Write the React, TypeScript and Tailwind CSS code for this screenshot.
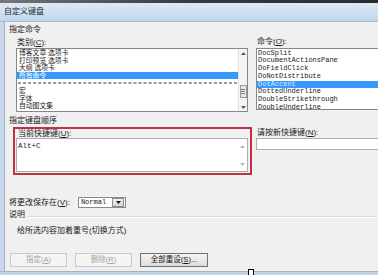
// Word "自定义键盘" dialog (Customize Keyboard), cropped screenshot

const categories = ['博客文章 选项卡', '打印预览 选项卡', '大纲 选项卡', '所有命令', '---', '宏', '字体', '自动图文集'];
const commands = [
  'DocSplit',
  'DocumentActionsPane',
  'DoFieldClick',
  'DoNotDistribute',
  'DotAccent',
  'DottedUnderline',
  'DoubleStrikethrough',
  'DoubleUnderline',
];

function Arrow({ up, dim }: { up?: boolean; dim?: boolean }) {
  return (
    <svg width="5" height="3" viewBox="0 0 5 3" className="block">
      <path d={up ? 'M0 3 L2.5 0 L5 3 Z' : 'M0 0 L2.5 3 L5 0 Z'} fill={dim ? '#b4b4b4' : '#5a5a5a'} />
    </svg>
  );
}

function Btn({ label, mn, disabled, w }: { label: string; mn: string; disabled?: boolean; w: string }) {
  return (
    <div
      className={`${w} h-[14px] flex items-center justify-center border text-[7.5px] ${
        disabled
          ? 'border-[#c9c9c9] bg-[#f4f4f4] text-[#a3a3a3]'
          : 'border-[#707070] bg-linear-to-b from-[#f4f4f4] to-[#dcdcdc] text-[#111]'
      }`}
    >
      {label}(<span className="underline">{mn}</span>){disabled ? '' : '...'}
    </div>
  );
}

export default function App() {
  return (
    <div className="relative w-[378px] h-[275px] overflow-hidden bg-[#f0f0f0] flex flex-col font-['Liberation_Sans','Noto_Sans_CJK_SC',sans-serif] text-[8px] leading-[10px] text-[#1a1a1a]">
      <div className="h-[3px] shrink-0 bg-linear-to-r from-[#777] via-[#3a3a3a] to-[#2c2c2c]" />
      <div className="h-[19px] shrink-0 flex items-center pl-[4px] bg-linear-to-b from-[#dde9f6] to-[#c2d7ee] border-b border-[#a6bbd3] text-[8px] text-[#1e2430]">
        自定义键盘
      </div>

      <div className="flex-1 flex min-h-0">
        <div className="w-[5px] shrink-0 bg-[#c9d9eb] border-r border-[#9fb0c4]" />
        <div className="flex-1 flex flex-col pl-[4px]">
          <div className="mt-[3px] h-[10px]">指定命令</div>

          {/* categories + commands */}
          <div className="mt-[3px] flex gap-[4px] ml-[4px]">
            <div className="w-[239px] shrink-0 flex flex-col">
              <div className="h-[10px] pl-[4px]">
                类别(<span className="underline">C</span>):
              </div>
              <div className="ml-[3px] w-[232px] h-[64px] bg-white border border-[#828790] flex">
                <div className="flex-1 flex flex-col">
                  {categories.map((c) =>
                    c === '---' ? (
                      <div key={c} className="h-[7.6px] flex items-center px-[1px]">
                        <div className="w-full h-[2px] border-t border-b border-dashed border-[#9a9a9a]" />
                      </div>
                    ) : (
                      <div
                        key={c}
                        className={`h-[7.6px] flex items-center pl-[2px] text-[6.8px] leading-[7.6px] ${
                          c === '所有命令' ? 'bg-[#3399ff] text-white' : ''
                        }`}
                      >
                        {c}
                      </div>
                    )
                  )}
                </div>
                <div className="w-[9px] shrink-0 flex flex-col bg-[#f4f4f4] border-l border-[#e4e4e4]">
                  <div className="h-[8px] flex items-center justify-center">
                    <Arrow up />
                  </div>
                  <div className="h-[28px]" />
                  <div className="h-[13px] mx-[0.5px] border border-[#9a9a9a] bg-[#e8e8e8] flex flex-col items-center justify-center gap-[1px]">
                    <div className="w-[4px] h-px bg-[#7a7a7a]" />
                    <div className="w-[4px] h-px bg-[#7a7a7a]" />
                    <div className="w-[4px] h-px bg-[#7a7a7a]" />
                  </div>
                  <div className="flex-1" />
                  <div className="h-[8px] flex items-center justify-center">
                    <Arrow />
                  </div>
                </div>
              </div>
            </div>

            <div className="w-[140px] shrink-0 flex flex-col">
              <div className="h-[10px] pl-[1px] -mt-[1px] mb-[1px]">
                命令(<span className="underline">O</span>):
              </div>
              <div className="h-[62px] bg-white border border-[#828790] pt-[0.5px] font-['Liberation_Mono',monospace] text-[7px]">
                {commands.map((c) => (
                  <div
                    key={c}
                    className={`h-[7.8px] leading-[7.8px] pl-[1px] ${c === 'DotAccent' ? 'bg-[#3399ff] text-[#dbeaff]' : ''}`}
                  >
                    {c}
                  </div>
                ))}
              </div>
            </div>
          </div>

          <div className="mt-[4px] h-[10px]">指定键盘顺序</div>

          {/* shortcut row */}
          <div className="mt-[1px] flex gap-[4px] ml-[4px]">
            <div className="w-[239px] h-[48px] shrink-0 border-2 border-[#c0323f] flex flex-col pl-[1px] pr-[2px]">
              <div className="h-[9px] leading-[9px] pl-[2px]">
                当前快捷键(<span className="underline">U</span>):
              </div>
              <div className="h-[34px] bg-white border border-[#abadb3] flex">
                <div className="flex-1 pl-[1px] pt-[3px] font-['Liberation_Mono',monospace] text-[7.5px] leading-[8px]">
                  Alt+C
                </div>
                <div className="w-[9px] shrink-0 flex flex-col justify-between py-[4px]">
                  <div className="h-[6px] flex items-center justify-center">
                    <Arrow up dim />
                  </div>
                  <div className="h-[6px] flex items-center justify-center">
                    <Arrow dim />
                  </div>
                </div>
              </div>
            </div>
            <div className="w-[140px] shrink-0 flex flex-col pt-[1px]">
              <div className="h-[10px] pl-[1px]">
                请按新快捷键(<span className="underline">N</span>):
              </div>
              <div className="h-[12px] bg-white border border-[#abadb3]" />
            </div>
          </div>

          {/* save in */}
          <div className="mt-[22px] h-[11px] flex items-center gap-[8px]">
            <div>
              将更改保存在(<span className="underline">V</span>):
            </div>
            <div className="w-[48px] h-[11px] bg-white border border-[#8a8a8a] flex items-center">
              <div className="flex-1 pl-[2px] font-['Liberation_Mono',monospace] text-[7px] leading-[9px]">Normal</div>
              <div className="w-[12px] h-[9px] mr-[0.5px] border border-[#8e8e8e] bg-linear-to-b from-[#f2f2f2] to-[#d6d6d6] flex items-center justify-center">
                <svg width="5" height="3" viewBox="0 0 5 3" className="block">
                  <path d="M0 0 L2.5 3 L5 0 Z" fill="#111" />
                </svg>
              </div>
            </div>
          </div>

          <div className="mt-[2px] h-[10px] flex items-center gap-[3px]">
            <div>说明</div>
            <div className="flex-1 mt-[3px] h-[2px] border-t border-[#dadada] border-b border-b-white" />
          </div>
          <div className="mt-[6px] h-[10px] pl-[8px]">给所选内容加着重号(切换方式)</div>

          <div className="mt-[17px] flex gap-[8px] ml-[1px]">
            <Btn label="指定" mn="A" disabled w="w-[57px]" />
            <Btn label="删除" mn="R" disabled w="w-[57px]" />
            <Btn label="全部重设" mn="S" w="w-[68px]" />
          </div>
        </div>
      </div>

      <div className="h-[4px] shrink-0 bg-[#c4d4e6] border-t border-[#a3b3c6]" />
      <div className="absolute left-[248px] top-[269px] w-[6px] h-[7px] bg-white border border-black" />
    </div>
  );
}
